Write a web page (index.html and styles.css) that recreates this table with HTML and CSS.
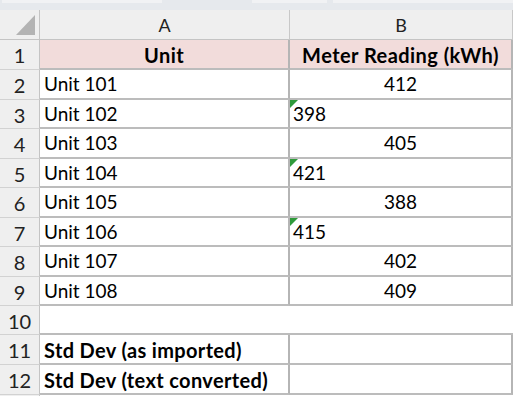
FILE: index.html
```html
<!DOCTYPE html>
<html>
<head>
<meta charset="utf-8">
<link rel="stylesheet" href="styles.css">
</head>
<body>
<div class="sheet">
  <div class="topbar"><span class="tb tb1"></span><span class="tb tb2"></span><span class="tb tb3"></span></div>
  <div class="row colhead">
    <div class="rh corner"><span class="tri"></span></div>
    <div class="ch a">A</div>
    <div class="ch b">B</div>
  </div>
  <div class="row h30">
    <div class="rh">1</div>
    <div class="c a hdr">Unit</div>
    <div class="c b hdr">Meter Reading (kWh)</div>
  </div>
  <div class="row h30">
    <div class="rh">2</div>
    <div class="c a">Unit 101</div>
    <div class="c b num">412</div>
  </div>
  <div class="row h29">
    <div class="rh">3</div>
    <div class="c a">Unit 102</div>
    <div class="c b txt">398</div>
  </div>
  <div class="row h30">
    <div class="rh">4</div>
    <div class="c a">Unit 103</div>
    <div class="c b num">405</div>
  </div>
  <div class="row h29">
    <div class="rh">5</div>
    <div class="c a">Unit 104</div>
    <div class="c b txt">421</div>
  </div>
  <div class="row h30">
    <div class="rh">6</div>
    <div class="c a">Unit 105</div>
    <div class="c b num">388</div>
  </div>
  <div class="row h29">
    <div class="rh">7</div>
    <div class="c a">Unit 106</div>
    <div class="c b txt">415</div>
  </div>
  <div class="row h30">
    <div class="rh">8</div>
    <div class="c a">Unit 107</div>
    <div class="c b num">402</div>
  </div>
  <div class="row h29">
    <div class="rh">9</div>
    <div class="c a">Unit 108</div>
    <div class="c b num">409</div>
  </div>
  <div class="row h29">
    <div class="rh">10</div>
    <div class="c a empty"></div>
    <div class="c b empty"></div>
  </div>
  <div class="row h30">
    <div class="rh">11</div>
    <div class="c a bold">Std Dev (as imported)</div>
    <div class="c b"></div>
  </div>
  <div class="row h30">
    <div class="rh">12</div>
    <div class="c a bold">Std Dev (text converted)</div>
    <div class="c b"></div>
  </div>
  <div class="row h30">
    <div class="rh"></div>
    <div class="c a empty"></div>
    <div class="c b empty"></div>
  </div>
</div>
</body>
</html>
```
FILE: styles.css
```css
html, body {
  margin: 0;
  padding: 0;
  background: #ffffff;
  overflow: hidden;
}

.sheet {
  width: 513px;
  height: 396px;
  overflow: hidden;
  font-family: Lato, "Open Sans", sans-serif;
  color: #000;
}

.topbar {
  height: 10px;
  background: #e6e9ed;
  display: flex;
  align-items: flex-start;
}

.tb {
  height: 3px;
  background: #f1f2f4;
}
.tb1 { width: 160px; margin-left: 2px; }
.tb2 { width: 76px; margin-left: 90px; }
.tb3 { width: 180px; margin-left: 6px; }

.row {
  display: flex;
}

.h30 { height: 30px; }
.h29 { height: 29px; }

.colhead {
  height: 30px;
}

.rh {
  width: 40px;
  flex: none;
  box-sizing: border-box;
  background: #efefef;
  border-right: 1px solid #c4c4c4;
  border-bottom: 1px solid #d2d2d2;
  display: flex;
  align-items: center;
  justify-content: center;
  font-size: 20px;
  color: #222;
  padding-top: 1px;
}

.corner {
  position: relative;
  border-bottom: 1px solid #c4c4c4;
}

.tri {
  position: absolute;
  right: 4px;
  bottom: 4px;
  width: 0;
  height: 0;
  border-left: 19px solid transparent;
  border-bottom: 20px solid #b3b3b3;
}

.ch {
  box-sizing: border-box;
  background: #efefef;
  border-right: 1px solid #c8c8c8;
  border-bottom: 1px solid #c4c4c4;
  display: flex;
  align-items: center;
  justify-content: center;
  font-size: 18px;
  color: #222;
  padding-top: 1px;
}

.a {
  width: 250px;
  flex: none;
}

.b {
  width: 223px;
  flex: none;
}

.c {
  box-sizing: border-box;
  position: relative;
  border-right: 2px solid #b5b5b5;
  border-bottom: 2px solid #bcbcbc;
  display: flex;
  align-items: center;
  font-size: 19px;
  line-height: 1.2;
  padding-left: 4px;
  padding-top: 1px;
  white-space: nowrap;
}

.hdr {
  background: #f2dcdb;
  font-weight: 700;
  font-size: 20px;
  letter-spacing: 0.45px;
  justify-content: center;
  padding-left: 0;
}

.num {
  justify-content: center;
  padding-left: 0;
}

.txt {
  padding-left: 3px;
}

.txt::before {
  content: "";
  position: absolute;
  left: 0;
  top: 0;
  width: 0;
  height: 0;
  border-top: 8px solid #2f9a3a;
  border-right: 8px solid transparent;
}

.bold {
  font-weight: 700;
  font-size: 20px;
  letter-spacing: 0.35px;
}

.empty {
  border-right: none;
}
```
